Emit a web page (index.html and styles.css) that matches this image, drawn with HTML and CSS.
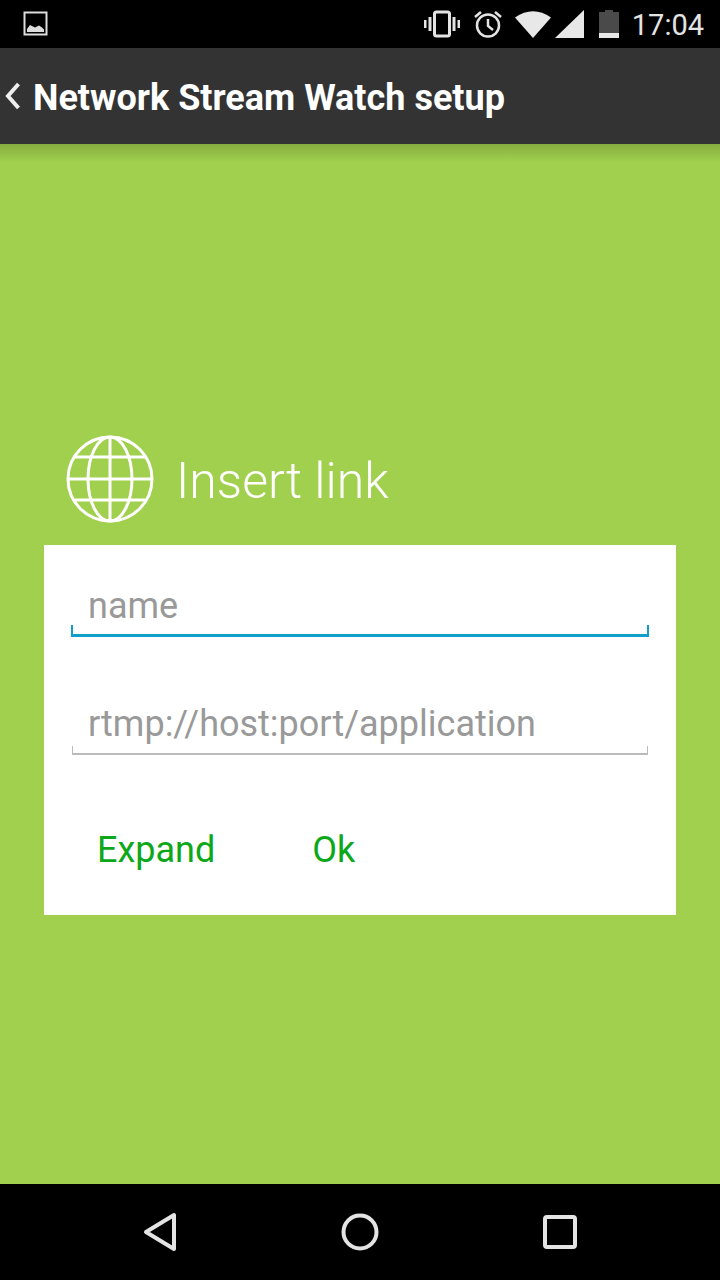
FILE: index.html
```html
<!DOCTYPE html>
<html lang="en">
<head>
  <meta charset="UTF-8">
  <title>Network Stream Watch setup</title>
  <link rel="stylesheet" href="styles.css">
</head>
<body>
  <div class="phone">
    <div class="status-bar">
      <svg class="notif-icon" width="26" height="26" viewBox="0 0 26 26">
        <rect x="1.500" y="1.500" width="22" height="22" fill="none" stroke="#ddd" stroke-width="2"/>
        <path d="M4 21v-3l3-4 3 1.500 2 1 4-2 3 2 2 2v2.500z" fill="#ddd"/>
      </svg>
      <div class="status-right">
        <svg width="36" height="28" viewBox="0 0 36 28">
          <rect x="10.500" y="2" width="15" height="24" rx="2" fill="none" stroke="#e4e4e4" stroke-width="3"/>
          <path d="M1 10v8M6 7v14M30 7v14M35 10v8" stroke="#e4e4e4" stroke-width="3" fill="none"/>
        </svg>
        <svg class="alarm" width="30" height="30" viewBox="0 0 30 30">
          <circle cx="15" cy="16.500" r="11" fill="none" stroke="#e4e4e4" stroke-width="2.500"/>
          <path d="M15 10v7l5 4M2 8l6-5M28 8l-6-5" fill="none" stroke="#e4e4e4" stroke-width="2.500"/>
        </svg>
        <svg class="wifi" width="36" height="28" viewBox="0 0 36 28">
          <path d="M0 7.500Q18-5 36 7.500L18 28z" fill="#e8e8e8"/>
        </svg>
        <svg class="signal" width="29" height="28" viewBox="0 0 29 28">
          <path d="M0 28L29 0v28z" fill="#e8e8e8"/>
        </svg>
        <svg class="battery" width="20" height="28" viewBox="0 0 20 28">
          <path d="M6 0h8v2h6v26H0V2h6z" fill="#4a4a4a"/>
          <rect y="23" width="20" height="5" fill="#e8e8e8"/>
        </svg>
        <span class="clock">17:04</span>
      </div>
    </div>

    <div class="action-bar">
      <svg width="18" height="30" viewBox="0 0 18 30">
        <path d="M15.500 3L5 15l10.500 12" fill="none" stroke="#eee" stroke-width="4"/>
      </svg>
      <h1 class="title">Network Stream Watch setup</h1>
    </div>

    <div class="content">
      <div class="dialog">
        <div class="dialog-head">
          <svg width="88" height="88" viewBox="0 0 88 88">
            <g fill="none" stroke="#fff" stroke-width="3">
              <circle cx="44" cy="44" r="42"/>
              <ellipse cx="44" cy="44" rx="22" ry="42"/>
              <path d="M44 2v84M2 44h84M9 22h70M9 65h70"/>
            </g>
          </svg>
          <span class="dialog-title">Insert link</span>
        </div>
        <div class="card">
          <div class="field field-active">name</div>
          <div class="field">rtmp://host:port/application</div>
          <div class="actions">
            <span class="action">Expand</span>
            <span class="action">Ok</span>
          </div>
        </div>
      </div>
    </div>

    <div class="nav-bar">
      <svg width="34" height="40" viewBox="0 0 34 40">
        <path d="M31 3v34L3 20z" fill="none" stroke="#e4e4e4" stroke-width="4" stroke-linejoin="round"/>
      </svg>
      <svg width="38" height="38" viewBox="0 0 38 38">
        <circle cx="19" cy="19" r="16.500" fill="none" stroke="#e4e4e4" stroke-width="4"/>
      </svg>
      <svg width="34" height="34" viewBox="0 0 34 34">
        <rect x="2" y="2" width="30" height="30" rx="2" fill="none" stroke="#e4e4e4" stroke-width="4"/>
      </svg>
    </div>
  </div>
</body>
</html>
```

FILE: styles.css
```css
* {
  box-sizing: border-box;
  margin: 0;
  padding: 0;
}

body {
  font-family: 'Roboto', sans-serif;
  background-color: #000;
}

.phone {
  width: 720px;
  height: 1280px;
  display: flex;
  flex-direction: column;
}

.status-bar {
  height: 48px;
  background-color: #000;
  display: flex;
  justify-content: space-between;
  align-items: center;
  padding: 0 16px 0 23px;
}

.status-right {
  display: flex;
  align-items: center;
}

.alarm {
  margin-left: 13px;
}

.wifi {
  margin-left: 12px;
}

.signal {
  margin-left: 4px;
}

.battery {
  margin-left: 15px;
}

.clock {
  margin-left: 13px;
  padding-top: 2px;
  color: #e4e4e4;
  font-size: 29px;
}

.action-bar {
  height: 96px;
  background-color: #333;
  display: flex;
  align-items: center;
  gap: 12px;
  padding-left: 3px;
}

.title {
  color: #fff;
  font-size: 36px;
  font-weight: 700;
  padding-top: 4px;
}

.content {
  flex: 1;
  background: linear-gradient(#85ad40, #a1d04e 18px);
  padding: 291px 44px 0;
}

.dialog-head {
  height: 88px;
  display: flex;
  align-items: center;
  gap: 22px;
  margin: 0 0 22px 22px;
}

.dialog-title {
  color: #fff;
  font-size: 50px;
  font-weight: 300;
  padding-top: 4px;
}

.card {
  height: 370px;
  background-color: #fff;
  padding: 32px 28px 0;
}

.field {
  height: 60px;
  margin-bottom: 58px;
  padding: 8px 0 0 15px;
  color: #999;
  font-size: 36px;
  border: 2px solid #bbb;
  border-width: 0 1px 2px;
  border-image: linear-gradient(transparent 52px, #bbb 52px) 1;
}

.field-active {
  margin-left: -1px;
  margin-right: -1px;
  border-color: #0f9fc9;
  border-width: 0 2px 3px;
  border-image: linear-gradient(transparent 50px, #0f9fc9 50px) 1;
}

.actions {
  display: flex;
  gap: 97px;
  padding-left: 25px;
  margin-top: 74px;
}

.action {
  color: #0ca81a;
  font-size: 36px;
}

.nav-bar {
  height: 96px;
  background-color: #000;
  display: flex;
  justify-content: space-between;
  align-items: center;
  padding: 0 143px;
}
```
